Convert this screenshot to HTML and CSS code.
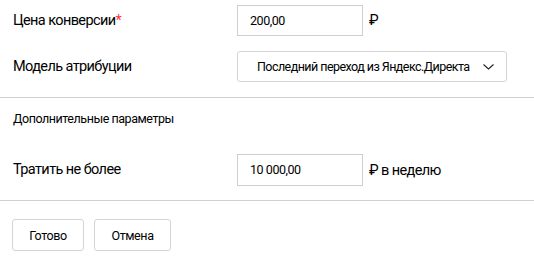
FILE: index.html
```html
<!DOCTYPE html>
<html lang="ru">
<head>
<meta charset="utf-8">
<link rel="stylesheet" href="styles.css">
</head>
<body>
<div class="form">
  <div class="row row-first">
    <div class="label">Цена конверсии<span class="req">*</span></div>
    <div class="control">
      <div class="input">200,00</div>
      <span class="unit">₽</span>
    </div>
  </div>
  <div class="row">
    <div class="label">Модель атрибуции</div>
    <div class="control">
      <div class="select">
        <span class="select-text">Последний переход из Яндекс.Директа</span>
        <svg class="chev" width="11" height="6" viewBox="0 0 11 6"><path d="M0.5 0.5 L5.5 5 L10.5 0.5" fill="none" stroke="#222" stroke-width="1.1"/></svg>
      </div>
    </div>
  </div>
  <div class="divider div1"></div>
  <div class="heading">Дополнительные параметры</div>
  <div class="row row-spend">
    <div class="label">Тратить не более</div>
    <div class="control">
      <div class="input">10 000,00</div>
      <span class="unit">₽ в неделю</span>
    </div>
  </div>
  <div class="divider div2"></div>
  <div class="buttons">
    <button class="btn btn-ok">Готово</button>
    <button class="btn btn-cancel">Отмена</button>
  </div>
</div>
</body>
</html>
```
FILE: styles.css
```css
html, body {
  margin: 0;
  padding: 0;
  background: #fff;
}
body {
  width: 534px;
  height: 259px;
  overflow: hidden;
  font-family: Roboto, "Liberation Sans", Arial, sans-serif;
  color: #000;
}
.form {
  display: flex;
  flex-direction: column;
}
.row {
  display: grid;
  grid-template-columns: 224px 1fr;
  align-items: center;
  padding-left: 13px;
  height: 31px;
  margin-top: 15px;
}
.row-first {
  margin-top: 5px;
}
.label {
  font-size: 14.5px;
  line-height: 18px;
  letter-spacing: -0.6px;
}
.req {
  color: #f33;
}
.control {
  display: flex;
  align-items: center;
}
.input {
  box-sizing: border-box;
  width: 126px;
  height: 31px;
  border: 1px solid #cfcfcf;
  padding-left: 12px;
  font-size: 12.5px;
  line-height: 29px;
  letter-spacing: -0.45px;
}
.unit {
  margin-left: 6px;
  font-size: 14.5px;
  letter-spacing: -0.6px;
}
.select {
  box-sizing: border-box;
  width: 270px;
  height: 31px;
  border: 1px solid #d4d4d4;
  border-radius: 3px;
  display: flex;
  align-items: center;
  padding-left: 19px;
  padding-right: 12px;
  font-size: 12.5px;
  letter-spacing: -0.55px;
  white-space: nowrap;
}
.select-text {
  flex: 1;
  min-width: 0;
}
.chev {
  display: block;
  flex: none;
}
.divider {
  height: 1px;
  background: #d0d0d0;
}
.div1 {
  margin-top: 15px;
}
.heading {
  padding-left: 13px;
  margin-top: 13px;
  font-size: 12.5px;
  line-height: 16px;
  letter-spacing: -0.45px;
}
.row-spend {
  margin-top: 27px;
  height: 32px;
}
.row-spend .input {
  height: 32px;
}
.div2 {
  margin-top: 14px;
}
.buttons {
  display: flex;
  gap: 10px;
  padding-left: 12px;
  margin-top: 18px;
}
.btn {
  box-sizing: border-box;
  height: 32px;
  border: 1px solid #d4d4d4;
  border-radius: 3px;
  background: #fff;
  font-family: Roboto, "Liberation Sans", Arial, sans-serif;
  font-size: 12.5px;
  letter-spacing: -0.4px;
  color: #000;
  padding: 0;
}
.btn-ok {
  width: 72px;
}
.btn-cancel {
  width: 77px;
}
```
